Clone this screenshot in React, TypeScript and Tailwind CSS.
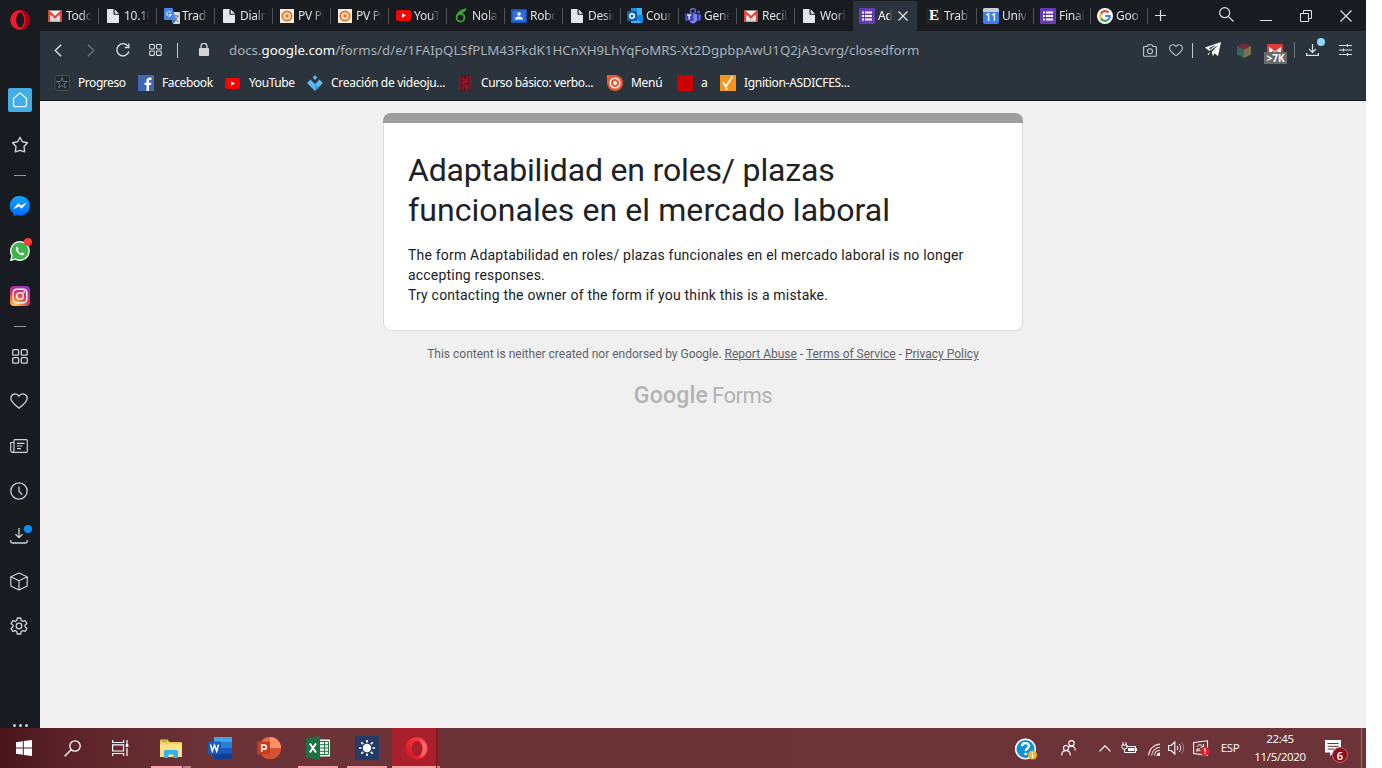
import React from "react";

type P = { children?: React.ReactNode; className?: string };

const Svg = ({ w = 16, h = 16, vb, children, className = "" }: P & { w?: number; h?: number; vb?: string }) => (
  <svg width={w} height={h} viewBox={vb ?? `0 0 ${w} ${h}`} fill="none" className={`block shrink-0 ${className}`}>
    {children}
  </svg>
);

const Cell = ({ className = "", children }: P) => (
  <div className={`relative flex shrink-0 items-center justify-center ${className}`}>{children}</div>
);

/* ---------- favicons ---------- */
const Gmail = () => (
  <Svg w={14} h={12} vb="0 0 15 12">
    <rect width="15" height="12" rx="1" fill="#f2f2f2" />
    <path d="M2 12 7.5 6 13 12Z" fill="#d8d8d8" />
    <path d="M1.2 12V1.6L7.5 7.3 13.8 1.6V12" stroke="#db4437" strokeWidth="2.4" />
  </Svg>
);
const Doc = () => (
  <Svg w={12} h={14} className="ml-px">
    <path d="M1 0H6.500V5.800H12V13a1 1 0 0 1-1 1H1a1 1 0 0 1-1-1V1a1 1 0 0 1 1-1Z" fill="#e4e7ea" />
    <path d="M7.700 0.200 11.900 4.700H7.700Z" fill="#e4e7ea" />
  </Svg>
);
const Translate = () => (
  <Svg w={16} h={16}>
    <path d="M6 4h9a1 1 0 0 1 1 1v10a1 1 0 0 1-1 1H9Z" fill="#d5d8dc" />
    <path d="M9 8h6M12 7v1M10 13c2-1 3.500-3 3.500-5M10.500 9c.5 2 2 3.500 4 4.500" stroke="#6f7d8c" strokeWidth="1" />
    <path d="M1 0h7.500l3.500 12H1a1 1 0 0 1-1-1V1a1 1 0 0 1 1-1Z" fill="#4a86e8" />
    <path d="M8.500 12H12l-2.500 4Z" fill="#3367d6" />
    <path d="M7 4.600A2.300 2.300 0 1 0 7.300 6.500H5" stroke="#fff" strokeWidth="1" />
  </Svg>
);
const OrangeTarget = () => (
  <Svg w={14} h={14}>
    <rect width="14" height="14" fill="#f5ede7" />
    <circle cx="7" cy="7" r="4.600" stroke="#f47b20" strokeWidth="2" />
    <circle cx="7" cy="7" r="1.900" fill="#f47b20" />
  </Svg>
);
const YouTube = () => (
  <Svg w={15} h={11}>
    <rect width="15" height="11" rx="2.500" fill="#f00" />
    <path d="M6 3.200 10 5.500 6 7.800Z" fill="#fff" />
  </Svg>
);
const Nolan = () => (
  <Svg w={13} h={15} className="ml-px">
    <circle cx="5.500" cy="9.700" r="3.900" stroke="#3fa83a" strokeWidth="1.800" />
    <path d="M1.600 9C2 4.500 5 2.500 10.500 1.200 9.500 3.600 7.500 4.300 4.500 5.500" stroke="#3fa83a" strokeWidth="1.500" />
  </Svg>
);
const Classroom = () => (
  <Svg w={16} h={14} className="-ml-px">
    <rect width="16" height="14" rx="1" fill="#1a4fb8" />
    <rect x="1.500" y="1.500" width="13" height="11" fill="#2f6fe0" />
    <circle cx="8" cy="5" r="1.800" fill="#fff" />
    <path d="M4 10.500c0-2 2-3 4-3s4 1 4 3Z" fill="#fff" />
  </Svg>
);
const Outlook = () => (
  <Svg w={16} h={15} className="-ml-px">
    <path d="M4 0h11v8H4Z" fill="#1b8fd8" />
    <path d="M10 0h5v7h-5Z" fill="#35b5f2" />
    <path d="M4 7l6 3.500L16 7v7a1 1 0 0 1-1 1H4Z" fill="#39b8f3" />
    <path d="M16 7v7a1 1 0 0 1-1 1L6 9Z" fill="#1784d6" />
    <rect y="3" width="10" height="10" rx="1" fill="#0f5fb5" />
    <circle cx="5" cy="8" r="2.300" stroke="#fff" strokeWidth="1.500" />
  </Svg>
);
const Teams = () => (
  <Svg w={16} h={16} className="-ml-px">
    <circle cx="8" cy="3" r="2.500" stroke="#6a72d0" strokeWidth="1.300" />
    <circle cx="13.500" cy="4" r="1.600" fill="#5059c9" />
    <path d="M5 6h7v6a4 4 0 0 1-7 2Z" fill="#7b83eb" />
    <path d="M12.500 6.500H16v4a3 3 0 0 1-3.500 2.500Z" fill="#5059c9" />
    <rect y="5" width="8.500" height="8" rx="1" fill="#3f48b0" />
    <path d="M2.200 7.200h4M4.200 7.200v4.300" stroke="#fff" strokeWidth="1.300" />
  </Svg>
);
const Forms = () => (
  <Svg w={16} h={16} className="-ml-px">
    <rect width="16" height="16" rx="1" fill="#673ab7" />
    <path d="M3 4.500h2M3 8h2M3 11.500h2M6 4.500h7M6 8h7M6 11.500h7" stroke="#fff" strokeWidth="1.900" />
  </Svg>
);
const EIcon = () => (
  <div className="flex h-4 w-4 shrink-0 items-center justify-center bg-[#242424] font-['Liberation_Serif',serif] text-[15px] leading-none font-bold text-white">
    E
  </div>
);
const Calendar = () => (
  <div className="-ml-px flex h-4 w-4 shrink-0 flex-col overflow-hidden rounded-[2px] bg-[#3f7de8]">
    <div className="h-[4px] bg-[#c9cdd2]" />
    <div className="text-center font-['Open_Sans',sans-serif] text-[10px] leading-[11px] font-semibold text-white">11</div>
  </div>
);
const Google = () => (
  <Svg w={16} h={16} className="-ml-px">
    <circle cx="8" cy="8" r="8" fill="#fff" />
    <g strokeWidth="2.200">
      <path d="M11.500 4.600A4.800 4.800 0 0 0 3.900 5.600" stroke="#ea4335" />
      <path d="M3.900 5.600A4.800 4.800 0 0 0 3.900 10.400" stroke="#fbbc05" />
      <path d="M3.900 10.400A4.800 4.800 0 0 0 11.200 11.600" stroke="#34a853" />
      <path d="M11.200 11.600A4.800 4.800 0 0 0 12.800 8H8.200" stroke="#4285f4" />
    </g>
  </Svg>
);

const Tab = ({ icon, text, last, w = "w-[58px]" }: { icon: React.ReactNode; text: string; last?: boolean; w?: string }) => (
  <div className={`flex h-[31px] shrink-0 items-center pl-[7px] ${w}`}>
    <div className="flex w-[18px] shrink-0 items-center">{icon}</div>
    <div className="w-[26px] overflow-hidden text-[12px] tracking-[-0.250px] whitespace-nowrap text-[#dfe2e4] [mask-image:linear-gradient(to_right,#000_60%,transparent)]">
      {text}
    </div>
    {!last && <div className="mr-0 ml-auto h-4 w-px bg-[#4e5358]" />}
  </div>
);

/* ---------- browser icons ---------- */
const Grid4 = ({ s, c, className = "" }: { s: number; c: string; className?: string }) => (
  <Svg w={s} h={s - 1} vb="0 0 16 15" className={className}>
    <g stroke={c} strokeWidth="1.300">
      <rect x="0.700" y="0.700" width="5.900" height="5.500" rx="1" />
      <rect x="9.300" y="0.700" width="5.900" height="5.500" rx="1" />
      <rect x="0.700" y="8.700" width="5.900" height="5.500" rx="1" />
      <rect x="9.300" y="8.700" width="5.900" height="5.500" rx="1" />
    </g>
  </Svg>
);
const Heart = ({ w, c, className = "" }: { w: number; c: string; className?: string }) => (
  <Svg w={w} h={(w * 16) / 18} vb="0 0 18 16" className={className}>
    <path d="M9 15.200C6 12.800.8 9.300.8 5.100.8 1 6.600-.8 9 3.200 11.400-.8 17.200 1 17.200 5.100c0 4.200-5.200 7.700-8.200 10.100Z" stroke={c} strokeWidth="1.300" strokeLinejoin="round" />
  </Svg>
);
const OperaO = () => (
  <Svg w={20} h={20}>
    <ellipse cx="10" cy="10" rx="9.800" ry="10" fill="#f5182c" />
    <path d="M10 0.200c13.200 0 13.200 19.600 0 19.600 4-2 5-5 5-9.800s-1-8-5-9.800Z" fill="#a70014" />
    <ellipse cx="10.200" cy="10" rx="4" ry="7.600" fill="#181b20" />
  </Svg>
);

const Sidebar = () => (
  <aside className="flex h-[728px] w-10 shrink-0 flex-col overflow-hidden bg-[#181b20]">
    <Cell className="h-[78px] items-start pt-[10px]"><OperaO /></Cell>
    <Cell className="h-[44px]">
      <div className="flex h-6 w-6 items-center justify-center rounded-[2px] bg-[#42aee5]">
        <Svg w={16} h={16}>
          <path d="M1.500 6.500 8 1l6.500 5.500V13a1.700 1.700 0 0 1-1.700 1.700H3.200A1.700 1.700 0 0 1 1.500 13Z" stroke="#e4f4fc" strokeWidth="1.300" strokeLinejoin="round" />
        </Svg>
      </div>
    </Cell>
    <Cell className="h-[46px]">
      <Svg w={18} h={18}>
        <path d="M9 1.300 11.300 5.700 16.500 6.700 13 10.500 13.700 15.800 9 14.300 4.300 15.800 5 10.500 1.500 6.700 6.700 5.700Z" stroke="#cdd3da" strokeWidth="1.400" strokeLinejoin="round" />
      </Svg>
    </Cell>
    <Cell className="h-[14px]"><div className="h-px w-3 bg-[#8b96a2]" /></Cell>
    <Cell className="h-[48px]">
      <Svg w={20} h={20}>
        <defs><linearGradient id="ms" x1="0" y1="0" x2="0" y2="1"><stop stopColor="#12a5ff" /><stop offset="1" stopColor="#006bff" /></linearGradient></defs>
        <path d="M10 0a10 9.800 0 1 1-3.500 19L3.500 20v-2.500A9.800 9.800 0 0 1 10 0Z" fill="url(#ms)" />
        <path d="M4 12.500 8.200 7.500 11 9.700 16 7.300 11.800 12.300 9 10.200Z" fill="#fff" stroke="#fff" strokeWidth=".6" />
      </Svg>
    </Cell>
    <Cell className="h-[42px]">
      <Svg w={20} h={20}>
        <path d="M10 0.800a9.200 9.200 0 1 1-4.500 17.300L.8 19.300 2 14.600A9.200 9.200 0 0 1 10 .8Z" fill="#3fb44b" stroke="#e8efe9" strokeWidth="1.500" />
        <path d="M7.600 5.500c-3 .8-1.800 4.500.2 6.600s5.500 3.600 6.500.4l-2.200-1.200-1.200 1.200c-1.500-.6-2.600-1.900-3.100-3.200l1-1Z" fill="#fff" />
      </Svg>
      <div className="absolute top-[8px] left-[24px] h-2 w-2 rounded-full bg-[#ff3b35]" />
    </Cell>
    <Cell className="h-[48px]">
      <Svg w={20} h={20}>
        <defs>
          <radialGradient id="ig" cx=".25" cy="1" r="1.150"><stop stopColor="#ffd45c" /><stop offset=".3" stopColor="#f9802f" /><stop offset=".6" stopColor="#e02f68" /><stop offset="1" stopColor="#8a3ac8" /></radialGradient>
        </defs>
        <rect width="20" height="20" rx="4" fill="url(#ig)" />
        <rect x="3.200" y="3.200" width="13.600" height="13.600" rx="3.800" stroke="#fff" strokeWidth="1.400" />
        <circle cx="10" cy="10" r="3.300" stroke="#fff" strokeWidth="1.400" />
        <circle cx="14" cy="6" r=".9" fill="#fff" />
      </Svg>
    </Cell>
    <Cell className="h-[12px]"><div className="h-px w-3 bg-[#8b96a2]" /></Cell>
    <Cell className="h-[48px]"><Grid4 s={16} c="#cdd3da" className="-ml-px" /></Cell>
    <Cell className="h-[42px]"><Heart w={18} c="#cdd3da" className="-ml-[2px]" /></Cell>
    <Cell className="h-[48px]">
      <Svg w={18} h={14} className="-ml-[2px]">
        <path d="M4 .7h12.500a.8.8 0 0 1 .8.8v11a.8.8 0 0 1-.8.800H2.200A1.500 1.500 0 0 1 .7 11.800V3.500H3.500M4 .7v10.500c0 1-.5 1.800-1.500 1.800M7 4.300h7.500M7 7h5.500M7 9.700h4" stroke="#cdd3da" strokeWidth="1.200" />
      </Svg>
    </Cell>
    <Cell className="h-[42px]">
      <Svg w={18} h={18} className="-ml-[2px]">
        <circle cx="9" cy="9" r="8.200" stroke="#cdd3da" strokeWidth="1.300" />
        <path d="M9 4.500V9.300L12.200 12.700" stroke="#cdd3da" strokeWidth="1.300" />
      </Svg>
    </Cell>
    <Cell className="h-[48px]">
      <Svg w={18} h={16} className="-ml-[2px]">
        <path d="M9 0v9.500M5.500 6.200 9 9.700l3.500-3.500M.8 12v1.200A1.700 1.700 0 0 0 2.500 15h13a1.700 1.700 0 0 0 1.700-1.800V12" stroke="#cdd3da" strokeWidth="1.300" />
      </Svg>
      <div className="absolute top-[13px] left-[24px] h-2 w-2 rounded-full bg-[#0a8fff]" />
    </Cell>
    <Cell className="h-[42px]">
      <Svg w={18} h={19} className="-ml-[2px]">
        <path d="M9 1 17.200 4.800V14L9 18 .8 14V4.800ZM.8 4.800 9 8.800 17.200 4.800M9 8.800V18" stroke="#cdd3da" strokeWidth="1.200" strokeLinejoin="round" />
      </Svg>
    </Cell>
    <Cell className="h-[48px]">
      <Svg w={18} h={18} className="-ml-[2px]">
        <path d="M7.300 1h3.400l.5 2.500 1.600.9 2.400-.8 1.700 2.900L15 8.200v1.600l1.900 1.700-1.700 2.900-2.400-.8-1.600.9-.5 2.500H7.300l-.5-2.500-1.600-.9-2.400.8-1.700-2.900L3 9.800V8.200L1.100 6.500l1.700-2.900 2.400.8 1.600-.9Z" stroke="#cdd3da" strokeWidth="1.300" strokeLinejoin="round" />
        <circle cx="9" cy="9" r="2.800" stroke="#cdd3da" strokeWidth="1.300" />
      </Svg>
    </Cell>
    <div className="mt-auto flex h-[4px] justify-center gap-[3px]">
      <div className="h-[3px] w-[3px] rounded-full bg-[#cdd3da]" />
      <div className="h-[3px] w-[3px] rounded-full bg-[#cdd3da]" />
      <div className="h-[3px] w-[3px] rounded-full bg-[#cdd3da]" />
    </div>
  </aside>
);

const TabBar = () => (
  <div className="flex h-[31px] items-center bg-[#181b20] pl-px">
    <Tab icon={<Gmail />} text="Todo" />
    <Tab icon={<Doc />} text="10.10" />
    <Tab icon={<Translate />} text="Tradu" />
    <Tab icon={<Doc />} text="Dialn" />
    <Tab icon={<OrangeTarget />} text="PV Pr" />
    <Tab icon={<OrangeTarget />} text="PV Pr" />
    <Tab icon={<YouTube />} text="YouT" />
    <Tab icon={<Nolan />} text="Nola" />
    <Tab icon={<Classroom />} text="Robó" />
    <Tab icon={<Doc />} text="Desin" />
    <Tab icon={<Outlook />} text="Cour" />
    <Tab icon={<Teams />} text="Gene" />
    <Tab icon={<Gmail />} text="Recib" />
    <Tab icon={<Doc />} text="Work" last />
    <div className="mt-px flex h-[30px] w-[64px] shrink-0 items-center rounded-t-[3px] bg-[#2b343d] pl-[7px]">
      <Forms />
      <div className="ml-[3px] w-[14px] overflow-hidden text-[12px] tracking-[-0.250px] whitespace-nowrap text-white [mask-image:linear-gradient(to_right,#000_70%,transparent)]">Ad</div>
      <Svg w={10} h={10} className="ml-[6px]"><path d="M.5.5l9 9M9.500.5l-9 9" stroke="#e8eaec" strokeWidth="1.200" /></Svg>
    </div>
    <Tab icon={<EIcon />} text="Trab" w="w-[60px] pl-[9px]" />
    <Tab icon={<Calendar />} text="Univ" w="w-[57px]" />
    <Tab icon={<Forms />} text="Final" w="w-[57px]" />
    <Tab icon={<Google />} text="Goo" w="w-[57px]" />
    <Cell className="h-[31px] w-[25px]">
      <Svg w={11} h={11}><path d="M5.500 0v11M0 5.500h11" stroke="#dfe2e4" strokeWidth="1.200" /></Svg>
    </Cell>
    <Cell className="ml-auto h-[31px] w-[40px]">
      <Svg w={15} h={15} className="-mt-[3px]"><circle cx="5.700" cy="5.700" r="5" stroke="#dfe2e4" strokeWidth="1.200" /><path d="M9.300 9.300 14.500 14.500" stroke="#dfe2e4" strokeWidth="1.200" /></Svg>
    </Cell>
    <Cell className="h-[31px] w-[40px]"><div className="mt-[9px] h-px w-3 bg-[#dfe2e4]" /></Cell>
    <Cell className="h-[31px] w-[40px]">
      <Svg w={12} h={12}><path d="M.5 3.500h8v8h-8ZM3.500 3.500v-3h8v8h-3" stroke="#dfe2e4" strokeWidth="1" /></Svg>
    </Cell>
    <Cell className="h-[31px] w-[40px]">
      <Svg w={12} h={12}><path d="M.5.5l11 11M11.500.5l-11 11" stroke="#dfe2e4" strokeWidth="1.200" /></Svg>
    </Cell>
  </div>
);

const AddressBar = () => (
  <div className="flex h-[38px] items-center">
    <Cell className="w-[36px]"><Svg w={8} h={13}><path d="M7.200.7 1.200 6.500l6 5.800" stroke="#e4e7ea" strokeWidth="1.300" /></Svg></Cell>
    <Cell className="w-[30px]"><Svg w={8} h={13}><path d="M.8.7l6 5.800-6 5.800" stroke="#68727b" strokeWidth="1.300" /></Svg></Cell>
    <Cell className="w-[34px]">
      <Svg w={14} h={14}>
        <path d="M12 3.200A6.100 6.100 0 1 0 12.900 8.500" stroke="#dfe2e4" strokeWidth="1.300" />
        <path d="M12.800.5V4.500H8.800" stroke="#dfe2e4" strokeWidth="1.300" />
      </Svg>
    </Cell>
    <Cell className="w-[30px]"><Grid4 s={13} c="#dfe2e4" /></Cell>
    <Cell className="w-[14px]"><div className="h-[15px] w-px bg-[#c4c9cd]" /></Cell>
    <Cell className="w-[39px]">
      <Svg w={10} h={13} className="-mt-px"><rect y="5" width="10" height="8" rx=".8" fill="#d3d6d9" /><path d="M2 5.500V3.300a3 3 0 0 1 6 0v2.200" stroke="#d3d6d9" strokeWidth="1.300" /></Svg>
    </Cell>
    <div className="pt-[2px] pl-[6px] text-[13.250px] tracking-[0.020px] whitespace-nowrap text-[#a7b1b8]">
      docs.<span className="text-white">google.com</span>/forms/d/e/1FAIpQLSfPLM43FkdK1HCnXH9LhYqFoMRS-Xt2DgpbpAwU1Q2jA3cvrg/closedform
    </div>
    <div className="ml-auto flex h-full items-center pr-[7px]">
      <Cell className="w-[26px]">
        <Svg w={14} h={13}>
          <path d="M1.500 2.500H4L5 .7h4l1 1.800h2.500a.9.9 0 0 1 .9.900v8a.9.9 0 0 1-.9.900h-11a.9.9 0 0 1-.9-.9v-8a.9.9 0 0 1 .9-.9Z" stroke="#c3cad0" strokeWidth="1.100" />
          <circle cx="7" cy="7.200" r="2.500" stroke="#c3cad0" strokeWidth="1.100" />
        </Svg>
      </Cell>
      <Cell className="w-[26px]"><Heart w={14} c="#c3cad0" /></Cell>
      <Cell className="w-[6px]"><div className="h-[15px] w-px bg-[#c4c9cd]" /></Cell>
      <Cell className="w-[36px]">
        <Svg w={16} h={16} className="-mt-px">
          <path d="M16 0 13 14 9.200 11.200 8 14.500 6.700 10 13 3 4.500 9 0 5.500Z" fill="#fff" />
          <path d="M4 6 11 3 5 7.500Z" fill="#2b343d" />
          <path d="M4.500 10.500 3 13" stroke="#fff" />
        </Svg>
      </Cell>
      <Cell className="w-[26px]">
        <Svg w={14} h={15}>
          <path d="M7 0 14 3 7 6.500 0 3Z" fill="#76293a" />
          <path d="M0 3 7 6.500V15L0 11.500Z" fill="#336761" />
          <path d="M14 3 7 6.500V15l7-3.500Z" fill="#7d714d" />
        </Svg>
      </Cell>
      <Cell className="h-full w-[36px]">
        <Svg w={16} h={12}>
          <rect width="16" height="12" rx="1" fill="#e23b3b" />
          <path d="M2 2.500 8 7.500 14 2.500V12H2Z" fill="#fff" /><path d="M2 1.500 8 6.500 14 1.500M2.500 12 6.500 7M13.500 12 9.500 7" stroke="#e23b3b" strokeWidth="1.300" />
        </Svg>
        <div className="absolute top-[21px] left-[7px] flex h-[12px] w-[23px] items-center justify-center bg-[#6b6b6b] text-[10px] leading-none font-bold text-white">&gt;7K</div>
      </Cell>
      <Cell className="w-[2px]"><div className="h-[16px] w-px bg-[#6d747a]" /></Cell>
      <Cell className="h-full w-[36px]">
        <Svg w={13} h={12} className="-ml-px"><path d="M6.500 0v8M3 5l3.500 3.500L10 5M.6 9v2.400h11.800V9" stroke="#dfe2e4" strokeWidth="1.200" /></Svg>
        <div className="absolute top-[7px] left-[22px] h-2 w-2 rounded-full bg-[#8fd5ff]" />
      </Cell>
      <Cell className="w-[28px]">
        <Svg w={13} h={12}><path d="M0 1.500h13M0 6h13M0 10.500h13M8.500 0v3M4.500 4.500v3M8.500 9v3" stroke="#dfe2e4" strokeWidth="1.100" /></Svg>
      </Cell>
    </div>
  </div>
);

const Mark = ({ w, icon, text, tr = "" }: { w: string; icon: React.ReactNode; text: string; tr?: string }) => (
  <div className={`flex shrink-0 items-center ${w}`}>
    <div className="flex w-6 shrink-0 items-center">{icon}</div>
    <span className={`text-[12px] whitespace-nowrap text-white ${tr}`}>{text}</span>
  </div>
);

const Bookmarks = () => (
  <div className="flex h-[31px] items-center pb-[3px] pl-[14px]">
    <Mark w="w-[84px]" text="Progreso" tr="tracking-[-0.450px]" icon={
      <Svg w={16} h={16}><rect x="1" y=".5" width="14.500" height="15" rx="2" fill="#22282f" stroke="#454c55" /><path d="M8 2.500 9.300 6.500H13.500L10.200 9 11.500 13 8 10.500 4.500 13 5.800 9 2.500 6.500H6.700Z" stroke="#727a84" strokeWidth=".9" /></Svg>} />
    <Mark w="w-[87px]" text="Facebook" tr="tracking-[-0.380px]" icon={
      <Svg w={16} h={16}><rect width="16" height="16" fill="#4267b2" /><path d="M11 16V10h2l.4-2.300H11V6.200c0-.9.400-1.300 1.300-1.300h1.200V2.700C11 2.300 8.500 2.600 8.500 5.800v1.900H6.500V10h2v6Z" fill="#fff" /></Svg>} />
    <Mark w="w-[82px]" text="YouTube" tr="tracking-[-0.400px]" icon={<YouTube />} />
    <Mark w="w-[150px]" text="Creación de videoju..." tr="tracking-[-0.290px]" icon={
      <Svg w={16} h={16}><path d="M8 0l2.300 2.500L8 5 5.700 2.500Z" fill="#5cb8ee" /><path d="M3.500 4.500 8 9l4.500-4.500L16 8l-8 8L0 8Z" fill="#5cb8ee" /><path d="M8 9l4 3.500L8 16Z" fill="#3d96d4" /></Svg>} />
    <Mark w="w-[150px]" text="Curso básico: verbo..." tr="tracking-[-0.380px]" icon={
      <Svg w={16} h={16}><rect x="2.500" y=".5" width="11" height="15" rx="1" fill="#5b1520" /><path d="M3 1v14M13 1v14M6 2v3h4M10 1v6H6v3h4v5M6 12v3M5 7h6M6 12h5" stroke="#b5182b" strokeWidth=".9" /></Svg>} />
    <Mark w="w-[70px]" text="Menú" tr="tracking-[-0.300px]" icon={
      <Svg w={16} h={16}><path d="M0 0h8a8 8 0 1 1-8 8Z" fill="#ee5630" /><circle cx="8" cy="8" r="4.800" stroke="#fff" strokeWidth="1.500" /><circle cx="8" cy="8" r="2" fill="#fff" /></Svg>} />
    <Mark w="w-[43px]" text="a" icon={<div className="h-4 w-4 bg-[#c00]" />} />
    <Mark w="w-[140px]" text="Ignition-ASDICFES..." tr="tracking-[-0.310px]" icon={
      <Svg w={16} h={16}><rect width="16" height="16" fill="#f7941d" /><path d="M3 7 6 11.500 12.500 1.500" stroke="#fff" strokeWidth="1.800" /><circle cx="6.300" cy="14" r="1.100" fill="#fff" /></Svg>} />
  </div>
);

const FormPage = () => (
  <main className="flex min-h-0 flex-1 flex-col items-center bg-[#f0f0f0] pt-3 font-[Roboto,sans-serif]">
    <section className="w-[640px]">
      <div className="h-[10px] rounded-t-lg bg-[#9e9e9e]" />
      <div className="h-[208px] rounded-b-lg border border-t-0 border-[#dadce0] bg-white px-6 pt-[27px]">
        <h1 className="text-[32px] leading-[40px] whitespace-nowrap text-[#202124]">
          <span className="tracking-[-0.170px]">Adaptabilidad en roles/ plazas</span>
          <br />
          <span className="tracking-[0.080px]">funcionales en el mercado laboral</span>
        </h1>
        <p className="mt-[15px] text-[14px] leading-5 tracking-[0.200px] whitespace-nowrap text-[#202124]">
          The form Adaptabilidad en roles/ plazas funcionales en el mercado laboral is no longer
          <br />
          accepting responses.
          <br />
          Try contacting the owner of the form if you think this is a mistake.
        </p>
      </div>
    </section>
    <p className="mt-[15px] text-[12px] leading-4 whitespace-nowrap text-[#5f6368]">
      This content is neither created nor endorsed by Google. <span className="underline">Report Abuse</span> - <span className="underline">Terms of Service</span> -{" "}
      <span className="underline">Privacy Policy</span>
    </p>
    <div className="mt-[21px] flex h-[26px] items-center gap-[4px] leading-[26px] text-[#b3b3b3]">
      <span className="text-[23px] font-medium tracking-[0.200px]">Google</span>
      <span className="text-[22px] tracking-[-0.500px]">Forms</span>
    </div>
  </main>
);

const TaskIcon = ({ children, bar, w = "w-10 mr-[9px]" }: P & { bar?: boolean; w?: string }) => (
  <div className={`flex h-10 shrink-0 flex-col items-center ${w}`}>
    <div className="flex h-[38px] items-center justify-center pt-[2px]">{children}</div>
    {bar && <div className="h-[2px] w-full bg-[#f9a5ab]" />}
  </div>
);

const Taskbar = () => (
  <footer className="flex h-10 w-[1366px] bg-[linear-gradient(to_right,#48151a_0px,#5a2228_60px,#6b3237_200px,#6c3338_100%)] font-['Open_Sans',sans-serif] text-white">
    <Cell className="w-12">
      <Svg w={16} h={16}><path d="M0 2.200 6.800 1.200V7.500H0ZM7.800 1 16 0V7.500H7.800ZM0 8.500H6.800V14.800L0 13.800ZM7.800 8.500H16V16L7.800 15Z" fill="#fff" /></Svg>
    </Cell>
    <Cell className="w-12">
      <Svg w={17} h={17}><circle cx="11" cy="6" r="5.200" stroke="#fff" strokeWidth="1.300" /><path d="M7.200 9.700.7 16.300" stroke="#fff" strokeWidth="1.300" /></Svg>
    </Cell>
    <Cell className="w-12">
      <Svg w={17} h={16}><path d="M.6 0v2.500h11V0M.6 16v-2.500h11V16M.6 4.800h10.900v6.200H.6ZM15 0v4M15 8v8" stroke="#fff" strokeWidth="1.200" /><rect x="13.700" y="4" width="2.600" height="3" fill="#fff" /></Svg>
    </Cell>
    <div className="mr-[9px] ml-[7px] flex h-10 w-10 shrink-0 flex-col items-center">
      <div className="flex h-[38px] items-center pt-[2px]">
        <Svg w={22} h={19}>
          <path d="M0 1.500A1 1 0 0 1 1 .5h6.500L9.500 3H21a1 1 0 0 1 1 1v14H0Z" fill="#f5c64c" />
          <path d="M0 4.500h22V18H0Z" fill="#fde08a" /><path d="M2 2h5" stroke="#65b83e" />
          <path d="M4 19v-6.500a1.500 1.500 0 0 1 1.500-1.500h11A1.500 1.500 0 0 1 18 12.500V19h-4.500v-3.500h-5V19Z" fill="#37b1e8" />
        </Svg>
      </div>
      <div className="flex h-[2px] w-full"><div className="w-[31px] bg-[#f9a5ab]" /><div className="ml-px w-2 bg-[#b77d82]" /></div>
    </div>
    <TaskIcon>
      <Svg w={24} h={22}>
        <rect x="6" width="18" height="22" rx="1" fill="#185abd" /><path d="M6 0h18v5.500H6Z" fill="#41a5ee" /><path d="M6 5.500h18V11H6Z" fill="#2b7cd3" /><path d="M6 16.500h18V22H6Z" fill="#103f91" />
        <rect y="4.500" width="13" height="13" rx="1" fill="#185abd" /><path d="M2.500 7.500 4.300 14 6.500 8.200 8.700 14 10.500 7.500" stroke="#fff" strokeWidth="1.500" />
      </Svg>
    </TaskIcon>
    <TaskIcon>
      <Svg w={24} h={22}>
        <circle cx="13" cy="11" r="11" fill="#ed6c47" /><path d="M13 0a11 11 0 0 1 11 11H13Z" fill="#ff8f6b" /><path d="M2 11h22a11 11 0 0 1-22 0Z" fill="#d35230" />
        <rect y="4.500" width="13" height="13" rx="1" fill="#c43e1c" /><path d="M4.700 15V8h2.500a2 2 0 0 1 0 4.300H4.700" stroke="#fff" strokeWidth="1.600" />
      </Svg>
    </TaskIcon>
    <TaskIcon bar>
      <Svg w={24} h={24}>
        <rect x="11" y="3.500" width="13" height="17" fill="#f5f5f5" /><path d="M14 5.500h8.500v13H14M14 8.700h9M14 12h9M14 15.300h9M18.500 5v14" stroke="#217346" />
        <path d="M0 2.500 14 0v24L0 21.500Z" fill="#1e7145" /><path d="M3.800 7.500 10 16.500M10 7.500 3.800 16.500" stroke="#fff" strokeWidth="2" />
      </Svg>
    </TaskIcon>
    <TaskIcon bar w="w-10 mr-[5px]">
      <Svg w={24} h={24}>
        <rect width="24" height="24" fill="#263c66" /><circle cx="12" cy="12" r="4.200" fill="#fff" />
        <path d="M12 4v2.500M12 17.500V20M4 12h2.500M17.500 12H20M6.300 6.300l1.800 1.800M15.900 15.900l1.800 1.800M17.700 6.300l-1.800 1.800M6.300 17.700l1.800-1.800" stroke="#fff" strokeWidth="1.700" />
      </Svg>
    </TaskIcon>
    <div className="flex h-10 w-12 shrink-0 bg-[#6f1a22]">
      <div className="flex w-[44px] flex-col bg-[#a9202b]">
        <div className="flex h-[38px] items-center justify-center pt-[2px] pl-[4px]">
          <Svg w={23} h={23}>
            <defs><linearGradient id="op" x1="0" y1="1" x2="1" y2="0"><stop stopColor="#c01224" /><stop offset=".5" stopColor="#ee2a37" /><stop offset="1" stopColor="#ff4a50" /></linearGradient></defs>
            <circle cx="11.500" cy="11.500" r="11.300" fill="url(#op)" />
            <path d="M14 2.500c10.500 1 10 17 0 18 5-4 5-14 0-18Z" fill="#ff6a66" />
            <ellipse cx="12" cy="11.500" rx="5.300" ry="7.600" fill="#a9202b" />
          </Svg>
        </div>
        <div className="h-[2px] bg-[#f9a5ab]" />
      </div>
      <div className="ml-px flex w-[3px] items-end bg-[#8b212b]"><div className="h-[2px] w-full bg-[#d58289]" /></div>
    </div>
    <div className="ml-auto flex h-10">
      <Cell className="w-[34px]">
        <Svg w={24} h={22} className="mt-[2px] ml-[2px]">
          <circle cx="11.500" cy="11" r="9.800" fill="#0d93d8" stroke="#fff" strokeWidth="1.600" />
          <path d="M8 8.300C8 4 15 4.200 15 8c0 2.300-3.300 2.500-3.300 5M11.700 14.800v2.200" stroke="#fff" strokeWidth="2.300" />
          <circle cx="18.500" cy="17" r="4.600" fill="#efb323" /><path d="M18.500 14v1M18.500 16v4" stroke="#fff" strokeWidth="1.300" />
        </Svg>
      </Cell>
      <Cell className="w-[54px]">
        <Svg w={15} h={16} className="-ml-px">
          <circle cx="10.500" cy="3.300" r="2.700" stroke="#fff" strokeWidth="1.100" /><circle cx="5" cy="8" r="2.500" stroke="#fff" strokeWidth="1.100" />
          <path d="M.7 15.500c0-6.500 8.600-6.500 8.600 0M8 7c3-2 6.200-.5 6.400 3.500" stroke="#fff" strokeWidth="1.100" />
        </Svg>
      </Cell>
      <Cell className="w-[18px]"><Svg w={12} h={7}><path d="M.5 6.300 6 .8l5.500 5.500" stroke="#fff" strokeWidth="1.200" /></Svg></Cell>
      <Cell className="w-[29px]">
        <Svg w={16} h={13}><path d="M5.500 4.500h9v6h-9" stroke="#fff" strokeWidth="1" /><rect x="7" y="6" width="6.500" height="3" fill="#fff" /><rect x="14.500" y="6" width="1.500" height="3" fill="#fff" /><path d="M1 3h5v2.500a2 2 0 0 1-2.500 1.500A2 2 0 0 1 1 5.500ZM2 0v3M5 0v3M3.500 7v3.500H6" stroke="#fff" strokeWidth="1" /></Svg>
      </Cell>
      <Cell className="w-[22px]">
        <Svg w={13} h={13} className="mt-[2px]"><path d="M.6 12.500A12 12 0 0 1 12 1.100M3.600 12.500A9 9 0 0 1 12 4.300M6.500 12.500A6 6 0 0 1 12 7.300" stroke="#e9dcdd" strokeWidth="1.100" /><path d="M8.500 13a4 4 0 0 1 3.500-3.500V13Z" fill="#fff" /></Svg>
      </Cell>
      <Cell className="w-[22px]">
        <Svg w={17} h={14}><path d="M.6 4.500h2.500L6.800 1v12L3.100 9.500H.6Z" stroke="#fff" strokeWidth="1.100" /><path d="M9 5c1 1.200 1 2.800 0 4" stroke="#fff" /><path d="M11.200 3c2 2.300 2 5.700 0 8" stroke="#e8dcdd" /><path d="M13.500 1.200c2.700 3.300 2.700 8.300 0 11.600" stroke="#ae8589" /></Svg>
      </Cell>
      <Cell className="w-[28px]">
        <Svg w={17} h={16}><path d="M.6 2.500 14.500.8v14.500L.6 13.500Z" stroke="#fff" strokeWidth="1.100" /><path d="M4 7c1-3 5-3 6 0M10.500 4v3.200H7.500M10 9c-1 2.500-4.500 2.500-6 0M4 12V9h3" stroke="#fff" strokeWidth="1" /><circle cx="12" cy="11.300" r="4.700" fill="#e01f2d" /><path d="M12 8.300v3.400M12 12.700v1.400" stroke="#fff" strokeWidth="1.300" /></Svg>
      </Cell>
      <Cell className="w-[30px] text-[11.500px] tracking-[-0.350px]">ESP</Cell>
      <div className="flex w-[70px] flex-col items-center pt-[2px] text-[11.500px] leading-[18px] tracking-[-0.350px]">
        <span>22:45</span>
        <span>11/5/2020</span>
      </div>
      <Cell className="w-[42px]">
        <Svg w={16} h={16} className="-ml-[6px]"><path d="M0 0h16v12.500H8.500L5 16v-3.500H0Z" fill="#fff" /><path d="M2.500 3.500h11M2.500 6.300h11M2.500 9.100h7" stroke="#6c3338" strokeWidth="1" /></Svg>
        <div className="absolute top-[19px] left-[17px] flex h-4 w-4 items-center justify-center rounded-full border border-[#b16c74] bg-[#8d101e] text-[11px] leading-none font-semibold">6</div>
      </Cell>
      <div className="ml-1 h-10 w-[5px] border-l border-[#9a7276]" />
    </div>
  </footer>
);

export default function App() {
  return (
    <div className="h-[768px] w-[1382px] overflow-hidden bg-white font-['Noto_Sans','Open_Sans',sans-serif]">
      <div className="flex h-[728px] w-[1366px]">
        <Sidebar />
        <div className="flex min-w-0 flex-1 flex-col">
          <TabBar />
          <div className="h-[70px] border-b border-[#14171b] bg-[#2b343d]">
            <AddressBar />
            <Bookmarks />
          </div>
          <FormPage />
        </div>
      </div>
      <Taskbar />
    </div>
  );
}
